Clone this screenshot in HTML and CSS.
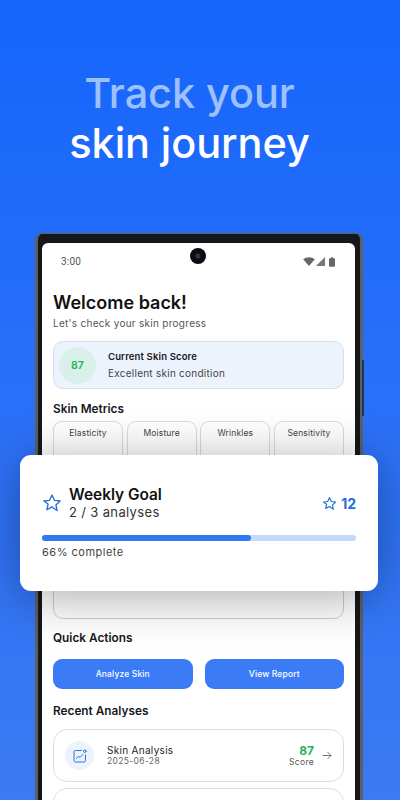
FILE: index.html
```html
<!DOCTYPE html>
<html lang="en">
<head>
<meta charset="utf-8">
<title>Track your skin journey</title>
<link rel="stylesheet" href="styles.css">
</head>
<body>
<main class="stage">
  <h1 class="headline"><span class="headline-soft">Track your</span><span class="headline-strong">skin journey</span></h1>
  <div class="phone">
    <span class="side-button"></span>
    <div class="screen">
      <div class="statusbar">
        <span class="clock">3:00</span>
        <span class="camera"></span>
        <span class="status-icons">
          <svg width="12" height="9" viewBox="0 0 13 10"><path d="M0 2.600C3.600-.6 9.400-.6 13 2.600L6.500 10z" fill="#666"/></svg>
          <svg class="signal" width="9" height="9" viewBox="0 0 10 10"><path d="M10 0v10H0z" fill="#777"/></svg>
          <svg class="battery" width="6" height="10" viewBox="0 0 7 11"><path d="M2.200 0h2.600v1H6a1 1 0 0 1 1 1v8a1 1 0 0 1-1 1H1a1 1 0 0 1-1-1V2a1 1 0 0 1 1-1h1.200z" fill="#666"/></svg>
        </span>
      </div>
      <div class="content">
        <h2 class="welcome">Welcome back!</h2>
        <p class="subtitle">Let's check your skin progress</p>
        <section class="score-card">
          <div class="score-circle">87</div>
          <div>
            <div class="score-title">Current Skin Score</div>
            <div class="score-sub">Excellent skin condition</div>
          </div>
        </section>
        <h3 class="section section-metrics">Skin Metrics</h3>
        <div class="metrics">
          <div class="metric">Elasticity</div>
          <div class="metric">Moisture</div>
          <div class="metric">Wrinkles</div>
          <div class="metric">Sensitivity</div>
        </div>
        <div class="hidden-card"></div>
        <h3 class="section section-actions">Quick Actions</h3>
        <div class="actions">
          <button class="action">Analyze Skin</button>
          <button class="action">View Report</button>
        </div>
        <h3 class="section section-recent">Recent Analyses</h3>
        <article class="row">
          <div class="row-icon">
            <svg width="14" height="14" viewBox="0 0 14 14" fill="none" stroke="#2a74d8" stroke-width="1" stroke-linecap="round" stroke-linejoin="round"><path d="M8.500 1.500H2.500a1.500 1.500 0 0 0-1.500 1.500v8.500a1.500 1.500 0 0 0 1.500 1.500h8.500a1.500 1.500 0 0 0 1.500-1.500V6"/><path d="M3.500 9.500 5.500 7.200l1.500 1.300L10 5.500"/><circle cx="11.800" cy="2.200" r="1.300"/></svg>
          </div>
          <div class="row-text">
            <div class="row-title">Skin Analysis</div>
            <div class="row-date">2025-06-28</div>
          </div>
          <div class="row-score">
            <div class="row-num">87</div>
            <div class="row-label">Score</div>
          </div>
          <svg class="row-arrow" width="10" height="9" viewBox="0 0 10 9" fill="none" stroke="#666" stroke-width=".9"><path d="M0.500 4.500h8.500M5.500 1l3.500 3.500L5.500 8"/></svg>
        </article>
        <article class="row"></article>
      </div>
    </div>
  </div>
  <aside class="goal-card">
    <div class="goal-head">
      <svg class="star-big" width="20" height="20" viewBox="0 0 24 24" fill="none" stroke="#1f6fd8" stroke-width="1.600" stroke-linejoin="round"><path d="M12 2.500l2.900 6.300 6.900.8-5.100 4.700 1.400 6.800L12 16.700l-6.100 3.400 1.400-6.800L2.200 9.600l6.900-.8z"/></svg>
      <div class="goal-text">
        <div class="goal-title">Weekly Goal</div>
        <div class="goal-sub">2 / 3 analyses</div>
      </div>
      <svg class="star-small" width="15" height="15" viewBox="0 0 24 24" fill="none" stroke="#1f6fd8" stroke-width="1.800" stroke-linejoin="round"><path d="M12 2.500l2.900 6.300 6.900.8-5.100 4.700 1.400 6.800L12 16.700l-6.100 3.400 1.400-6.800L2.200 9.600l6.900-.8z"/></svg>
      <span class="goal-count">12</span>
    </div>
    <div class="track"><div class="fill"></div></div>
    <div class="goal-pct">66% complete</div>
  </aside>
</main>
</body>
</html>
```
FILE: styles.css
```css
* { box-sizing: border-box; }
html, body { margin: 0; height: 100%; }
body { overflow: hidden; font-family: Inter, "Liberation Sans", sans-serif; }
.stage {
  position: relative;
  width: 400px;
  height: 800px;
  overflow: hidden;
  background: linear-gradient(180deg, #1565fc 0%, #2a70f8 50%, #3a7af3 100%);
}
.headline {
  margin: 0;
  padding: 68px 21px 0 0;
  height: 233px;
  display: flex;
  flex-direction: column;
  align-items: center;
  font-family: Inter, sans-serif;
  font-weight: 500;
  font-size: 41.500px;
  line-height: 50px;
  letter-spacing: -.1px;
}
.headline-soft { color: #9dc0ff; }
.headline-strong { color: #fff; }
.phone {
  position: relative;
  margin-left: 35px;
  width: 328px;
  height: 620px;
  padding: 8.500px 5px 0 4px;
  background: #15171a;
  border-style: solid;
  border-color: #5c6064;
  border-width: 1.500px 3px 0 3px;
  border-radius: 7px 7px 0 0;
}
.side-button {
  position: absolute;
  right: -4px;
  top: 126px;
  width: 2px;
  height: 56px;
  background: #23364f;
}
.screen {
  height: 100%;
  background: #fff;
  border-radius: 6px 6px 0 0;
  overflow: hidden;
}
.statusbar {
  position: relative;
  height: 36.500px;
  display: flex;
  align-items: center;
  justify-content: space-between;
  padding: 1.500px 20px 0 19px;
}
.clock { font-family: Roboto, sans-serif; font-size: 10px; color: #555; letter-spacing: .2px; }
.camera {
  position: absolute;
  left: 148px;
  top: 5.500px;
  width: 16px;
  height: 16px;
  border-radius: 50%;
  background: radial-gradient(circle at 50% 50%, #2a3350 0 2px, #0b0c10 3px);
}
.status-icons { display: flex; align-items: center; gap: 1px; }
.battery { margin-left: 3px; }
.content { padding: 0 11px; }
.welcome { margin: 13px 0 0; font-size: 18px; line-height: 22px; font-weight: 600; color: #111; }
.subtitle { margin: 3px 0 0; font-size: 10px; line-height: 13px; color: #555; letter-spacing: .28px; }
.score-card {
  margin-top: 11px;
  height: 48px;
  display: flex;
  align-items: center;
  gap: 12px;
  padding-left: 5px;
  background: #edf3fd;
  border: 1px solid #d6dfee;
  border-radius: 10px;
}
.score-circle {
  width: 37px;
  height: 37px;
  border-radius: 50%;
  background: #d9efe9;
  color: #22b455;
  font-size: 10.500px;
  font-weight: 600;
  display: flex;
  align-items: center;
  justify-content: center;
}
.score-title { font-size: 9.500px; line-height: 14px; font-weight: 600; color: #16181d; letter-spacing: .15px; }
.score-sub { margin-top: 2px; font-size: 10px; line-height: 14px; color: #444; letter-spacing: .25px; }
.section { margin: 0; font-size: 11.800px; line-height: 14px; font-weight: 600; color: #16181d; }
.section-metrics { margin-top: 13px; }
.metrics {
  margin-top: 5px;
  display: grid;
  grid-template-columns: repeat(4, 1fr);
  gap: 3.500px;
  height: 60px;
}
.metric {
  padding-top: 6px;
  text-align: center;
  font-size: 8.500px;
  line-height: 11px;
  color: #444;
  letter-spacing: .15px;
  background: #fff;
  border: 1px solid #dcdcdc;
  border-radius: 9px;
}
.hidden-card {
  margin-top: 4px;
  height: 134px;
  border: 1px solid #cfcfcf;
  border-radius: 10px;
}
.section-actions { margin-top: 12px; }
.actions { margin-top: 14px; display: flex; gap: 12px; }
.action {
  flex: 1;
  height: 30px;
  border: 0;
  padding: 0;
  border-radius: 9px;
  background: #3b7bf6;
  color: #fff;
  font-family: Inter, sans-serif;
  font-size: 8.500px;
  font-weight: 500;
  letter-spacing: .15px;
}
.section-recent { margin-top: 15px; }
.row {
  margin-top: 6px;
  height: 53px;
  display: flex;
  align-items: center;
  padding: 0 11px;
  border: 1px solid #dedede;
  border-radius: 14px;
}
.section-recent + .row { margin-top: 11px; }
.row-icon {
  width: 29px;
  height: 29px;
  border-radius: 50%;
  background: #edf3fd;
  display: flex;
  align-items: center;
  justify-content: center;
}
.row-text { flex: 1; margin-left: 13px; }
.row-title { font-size: 10px; line-height: 12px; color: #1d1f24; letter-spacing: .3px; }
.row-date { font-size: 8.500px; line-height: 11px; color: #666; letter-spacing: .35px; }
.row-score { text-align: right; }
.row-num { font-size: 12px; line-height: 13px; font-weight: 700; color: #22b455; }
.row-label { font-size: 8.500px; line-height: 11px; color: #555; letter-spacing: .3px; }
.row-arrow { margin-left: 8px; }
.goal-card {
  position: absolute;
  left: 20px;
  top: 455px;
  width: 358px;
  height: 136px;
  padding: 31px 22px 0;
  background: #fff;
  border-radius: 11px;
  box-shadow: 0 6px 50px rgba(0, 0, 0, .34);
}
.goal-head { display: flex; align-items: center; }
.star-big { margin-right: 7px; }
.goal-text { flex: 1; }
.goal-title { font-size: 15.400px; line-height: 18px; font-weight: 600; color: #111; }
.goal-sub { font-size: 13px; line-height: 16px; color: #333; letter-spacing: .35px; }
.goal-count { margin-left: 4px; font-size: 14px; font-weight: 700; color: #1f6fd8; }
.track { margin-top: 15px; height: 6px; border-radius: 3px; background: #c5dafa; }
.fill { width: 66.600%; height: 100%; border-radius: 3px; background: #2e79ef; }
.goal-pct { margin-top: 4px; font-size: 11px; line-height: 15px; color: #444; letter-spacing: .5px; }
```
